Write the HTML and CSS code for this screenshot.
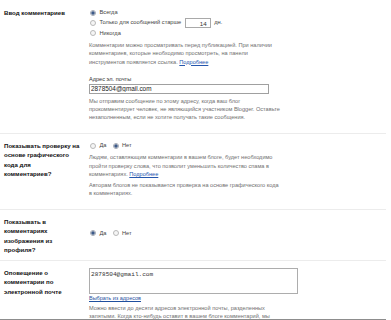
FILE: index.html
```html
<!DOCTYPE html>
<html lang="ru">
<head>
<meta charset="utf-8">
<title>Комментарии</title>
<link rel="stylesheet" href="styles.css">
</head>
<body>
<div class="settings">
  <div class="row row-first">
    <div class="label">Ввод комментариев</div>
    <div class="field">
      <label class="opt"><input type="radio" name="moder" class="radio" checked> Всегда</label>
      <label class="opt opt-days"><input type="radio" name="moder" class="radio"> Только для сообщений старше <input type="text" class="days" value="14"> дн.</label>
      <label class="opt"><input type="radio" name="moder" class="radio"> Никогда</label>
      <p class="help help-first">Комментарии можно просматривать перед публикацией. При наличии<br>комментариев, которые необходимо просмотреть, на панели<br>инструментов появляется ссылка. <a href="#">Подробнее</a></p>
      <div class="sublabel">Адрес эл. почты</div>
      <input type="text" class="email" value="2878504@gmail.com">
      <p class="help help-after-input">Мы отправим сообщение по этому адресу, когда ваш блог<br>прокомментирует человек, не являющийся участником Blogger. Оставьте<br>незаполненным, если не хотите получать такие сообщения.</p>
    </div>
  </div>

  <div class="row">
    <div class="label">Показывать проверку на<br>основе графического<br>кода для<br>комментариев?</div>
    <div class="field">
      <div class="opts-inline">
        <label class="opt"><input type="radio" name="captcha" class="radio"> Да</label>
        <label class="opt"><input type="radio" name="captcha" class="radio" checked> Нет</label>
      </div>
      <p class="help help-first">Людям, оставляющим комментарии в вашем блоге, будет необходимо<br>пройти проверку слова, что позволит уменьшить количество спама в<br>комментариях. <a href="#">Подробнее</a></p>
      <p class="help help-next">Авторам блогов не показывается проверка на основе графического кода<br>в комментариях.</p>
    </div>
  </div>

  <div class="row row-short">
    <div class="label">Показывать в<br>комментариях<br>изображения из<br>профиля?</div>
    <div class="field field-center">
      <div class="opts-inline">
        <label class="opt"><input type="radio" name="avatar" class="radio" checked> Да</label>
        <label class="opt"><input type="radio" name="avatar" class="radio"> Нет</label>
      </div>
    </div>
  </div>

  <div class="row row-last">
    <div class="label">Оповещение о<br>комментарии по<br>электронной почте</div>
    <div class="field">
      <textarea class="emails">2878504@gmail.com</textarea>
      <a href="#" class="pick">Выбрать из адресов</a>
      <p class="help help-pick">Можно ввести до десяти адресов электронной почты, разделенных<br>запятыми. Когда кто-нибудь оставит в вашем блоге комментарий, мы<br>отправим уведомление на эти адреса.</p>
    </div>
  </div>
</div>
<div class="bottom-bar"></div>
</body>
</html>
```

FILE: styles.css
```css
* {
  box-sizing: border-box;
}

html,
body {
  margin: 0;
  padding: 0;
  background: #ffffff;
}

body {
  width: 391px;
  height: 320px;
  overflow: hidden;
  font-family: "Liberation Sans", Arial, sans-serif;
  color: #333333;
}

.settings {
  width: 386px;
}

.row {
  display: flex;
  padding: 7px 0 5px 4px;
  border-bottom: 1px solid #ececec;
}

.row-first {
  padding-top: 8px;
}

.label {
  flex: none;
  width: 85px;
  padding-right: 2px;
  font-size: 6.1px;
  line-height: 9.5px;
  font-weight: bold;
  color: #111111;
  white-space: nowrap;
}

.field {
  flex: 1;
  min-width: 0;
}

.field-center {
  align-self: center;
  padding-bottom: 5px;
}

.opt {
  display: flex;
  align-items: center;
  gap: 3.5px;
  font-size: 5.7px;
  line-height: 9.5px;
  color: #444444;
}

.opt-days {
  height: 11px;
}

.opts-inline {
  display: flex;
  gap: 5px;
}

.radio {
  appearance: none;
  -webkit-appearance: none;
  flex: none;
  width: 6px;
  height: 6px;
  margin: 0 0 0 1px;
  border: 1px solid #b9b9b9;
  border-radius: 50%;
  background: #f5f5f5;
}

.radio:checked {
  border-color: #a3a9b3;
  background: radial-gradient(circle, #3d5a88 0, #3d5a88 1.4px, #dde2ea 1.9px);
}

.days {
  width: 26px;
  height: 10px;
  margin: 0;
  padding: 0 3px;
  border: 1px solid #a9a9a9;
  font-family: "Liberation Sans", Arial, sans-serif;
  font-size: 6.2px;
  text-align: right;
  color: #333333;
}

.help {
  width: 215px;
  margin: 0;
  font-size: 5.6px;
  line-height: 8.3px;
  color: #707070;
  white-space: nowrap;
}

.help a {
  color: #2456ad;
}

.help-first {
  margin-top: 3px;
}

.help-next {
  margin-top: 3px;
  margin-bottom: 6px;
}

.help-after-input {
  margin-top: 3px;
  margin-bottom: 6px;
}

.sublabel {
  margin-top: 9px;
  font-size: 5.6px;
  line-height: 8px;
  color: #333333;
}

.email {
  display: block;
  width: 180px;
  height: 10px;
  margin-top: 1px;
  padding: 0 1px;
  border: 1px solid #a0a0a0;
  font-family: "Liberation Sans", Arial, sans-serif;
  font-size: 6.4px;
  color: #222222;
}

.emails {
  display: block;
  width: 209px;
  height: 26px;
  margin: 0;
  padding: 2px 1px;
  resize: none;
  border: 1px solid #adadad;
  font-family: "Liberation Mono", "Courier New", monospace;
  font-size: 6.1px;
  line-height: 8px;
  color: #333333;
}

.pick {
  display: block;
  font-size: 5.5px;
  line-height: 9px;
  color: #1f4f9e;
  width: max-content;
}

.help-pick {
  margin-top: 1px;
}

.bottom-bar {
  position: fixed;
  left: 0;
  bottom: 0;
  width: 386px;
  height: 1px;
  background: #8d8d8d;
}
```
